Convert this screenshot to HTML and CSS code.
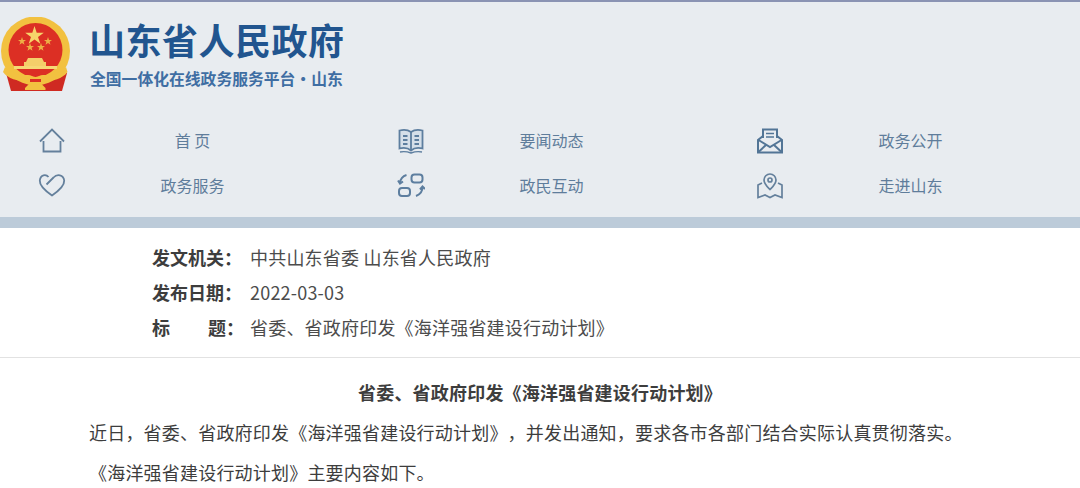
FILE: index.html
```html
<!DOCTYPE html>
<html lang="zh-CN">
<head>
  <meta charset="UTF-8" />
  <title>山东省人民政府</title>
  <link rel="stylesheet" href="styles.css">
</head>
<body>

  <header class="site-header">
    <div class="brand">
      <svg class="emblem" width="72" height="76" viewBox="0 0 72 76">
        <path d="M6 56 11 74h51l5-18z" fill="#cf2a22"/>
        <circle cx="35.500" cy="34" r="34.500" fill="#f2c140"/>
        <circle cx="35.500" cy="33" r="27" fill="#dc2f24"/>
        <polygon points="34.500,9 36.700,15.800 43.800,15.800 38,20 40.300,26.800 34.500,22.600 28.700,26.800 31,20 25.200,15.800 32.300,15.800" fill="#f6d46a"/>
        <polygon points="22,20 23,23 26,23 23.600,24.800 24.500,27.700 22,26 19.500,27.700 20.400,24.800 18,23 21,23" fill="#eeb045"/>
        <polygon points="48,20 49,23 52,23 49.600,24.800 50.500,27.700 48,26 45.500,27.700 46.400,24.800 44,23 47,23" fill="#eeb045"/>
        <polygon points="30,26 31,29 34,29 31.600,30.800 32.500,33.700 30,32 27.500,33.700 28.400,30.800 26,29 29,29" fill="#eeb045"/>
        <polygon points="41,26 42,29 45,29 42.600,30.800 43.500,33.700 41,32 38.500,33.700 39.400,30.800 37,29 40,29" fill="#eeb045"/>
        <path d="M28 41h14l2 4h2v4H24v-4h2z" fill="#f4cf6a"/>
        <path d="M14 49h43v3H14z" fill="#f6d876"/>
        <path d="M5 50c6 7 15 8 23 8 3 0 5 2 7.500 2s4.500-2 7.500-2c8 0 17-1 23-8l1.500 5c-5 7-15 9-23 9l-3 3 4 4v2H25v-2l4-4-3-3c-8 0-18-2-23-9z" fill="#f2c140"/>
        <path d="M30 62h11v3H30z" fill="#dc2f24"/>
      </svg>
      <div class="brand-text">
        <div class="brand-name">山东省人民政府</div>
        <div class="brand-sub">全国一体化在线政务服务平台·山东</div>
      </div>
    </div>

    <nav class="main-nav">
      <a class="nav-item">
        <svg class="nav-icon" width="28" height="28" viewBox="0 0 28 28" fill="none" stroke="#64809c" stroke-width="1.800">
          <path d="M2 14.500 14 2.500l12 12"/>
          <path d="M5.500 14v10.500h17V14"/>
        </svg>
        <span>首 页</span>
      </a>
      <a class="nav-item">
        <svg class="nav-icon" width="28" height="28" viewBox="0 0 28 28" fill="none" stroke="#5d7e9f" stroke-width="1.800">
          <path d="M2.500 3.500c4-1 8-1 11.500 1.500 3.500-2.500 7.500-2.500 11.500-1.500v18c-4-1-8-1-11.500 2-3.500-3-7.500-3-11.500-2z" fill="#d5dfe9"/>
          <path d="M14 5v18M6 9h4.500M6 13h4.500M6 17h4.500M17.500 9H22M17.500 13H22M17.500 17H22"/>
          <path d="M3 25c4-.8 7.500-.3 11 1 3.500-1.300 7-1.800 11-1" stroke-width="1.400"/>
        </svg>
        <span>要闻动态</span>
      </a>
      <a class="nav-item">
        <svg class="nav-icon" width="28" height="28" viewBox="0 0 28 28" fill="none" stroke="#527596" stroke-width="2">
          <path d="M7 11V2.500h14V11"/>
          <path d="M10 6.500h8M10 10h8" stroke-width="1.500"/>
          <path d="M7 9 2 13v12.500h24V13l-5-4"/>
          <path d="m2.500 13 11.500 7 11.500-7M2.500 25l8-7.500M25.500 25l-8-7.500"/>
        </svg>
        <span>政务公开</span>
      </a>
      <a class="nav-item">
        <svg class="nav-icon" width="28" height="28" viewBox="0 0 28 28" fill="none" stroke="#64809c" stroke-width="1.800">
          <path d="M10.500 5C8 2 2.500 2.500 1.800 8.500c-.4 5.500 7.200 11.500 12.200 15 5-3.500 12.600-9.500 12.200-15C25.500 2.500 19 1.800 15.500 5.500L8.500 12.500"/>
        </svg>
        <span>政务服务</span>
      </a>
      <a class="nav-item">
        <svg class="nav-icon" width="28" height="28" viewBox="0 0 28 28" fill="none" stroke="#5d7e9f" stroke-width="2">
          <rect x="14.500" y="2.500" width="11" height="8" rx="3"/>
          <rect x="2" y="16" width="11" height="8" rx="3"/>
          <path d="M9.500 3C6 4 3.500 6.500 3 11M1 8.500 3 11.500 6 9.500"/>
          <path d="M25.500 15c0 4.500-2.500 7.500-6.500 9M23 17.500l2.500-3 2.500 2.500" />
        </svg>
        <span>政民互动</span>
      </a>
      <a class="nav-item">
        <svg class="nav-icon" width="28" height="28" viewBox="0 0 28 28" fill="none" stroke="#64809c" stroke-width="1.700">
          <path d="M14 17.500c-3-3-6-5.500-6-9.500a6 6 0 0 1 12 0c0 4-3 6.500-6 9.500z"/>
          <circle cx="14" cy="8" r="2"/>
          <path d="M6 11 2 13v12.500l7-2.500 5 2.500 5-2.500 7 2.500V13l-4-2"/>
        </svg>
        <span>走进山东</span>
      </a>
    </nav>
  </header>

  <div class="band"></div>

  <section class="meta">
    <div class="meta-row"><span class="meta-label">发文机关：</span><span class="meta-value">中共山东省委 山东省人民政府</span></div>
    <div class="meta-row"><span class="meta-label">发布日期：</span><span class="meta-value">2022-03-03</span></div>
    <div class="meta-row"><span class="meta-label meta-spread"><i>标</i><i>题：</i></span><span class="meta-value">省委、省政府印发《海洋强省建设行动计划》</span></div>
  </section>

  <article class="content">
    <h2>省委、省政府印发《海洋强省建设行动计划》</h2>
    <p>近日，省委、省政府印发《海洋强省建设行动计划》，并发出通知，要求各市各部门结合实际认真贯彻落实。</p>
    <p>《海洋强省建设行动计划》主要内容如下。</p>
  </article>

</body>
</html>
```

FILE: styles.css
```css
:root {
  --fundo-topo: #e8ecf0;
  --azul-marca: #21558f;
  --azul-nav: #5f7d9b;
  --faixa: #bccbd9;
  --texto: #3d3d3d;
  --texto-leve: #4c4c4c;
  --linha: #e2e2e2;
}

html, body {
  height: 488px;
  overflow: hidden;
}

body {
  margin: 0;
  background: #fff;
  color: var(--texto);
  font-family: "Noto Sans CJK SC", "Liberation Sans", sans-serif;
  text-spacing-trim: space-all;
}

.site-header {
  height: 215px;
  background: var(--fundo-topo);
  border-top: 2px solid #8a93b3;
}

.brand {
  display: flex;
  align-items: flex-start;
  height: 108px;
  padding-top: 15px;
  box-sizing: border-box;
}

.emblem {
  flex: none;
}

.brand-text {
  margin: -2px 0 0 17px;
  color: var(--azul-marca);
  font-weight: 700;
}

.brand-name {
  font-size: 36px;
  line-height: 48px;
  letter-spacing: 0.500px;
}

.brand-sub {
  margin: 5px 0 0 1px;
  font-size: 15.800px;
  line-height: 22px;
  color: #3f6ea3;
  white-space: nowrap;
}

.main-nav {
  display: grid;
  grid-template-columns: repeat(3, 359px);
  grid-auto-rows: 45px;
  padding-top: 7px;
  padding-left: 38px;
}

.nav-item {
  display: flex;
  align-items: center;
  color: var(--azul-nav);
  font-size: 16px;
}

.nav-icon {
  flex: none;
  margin-top: 2px;
}

.nav-item span {
  width: 220px;
  margin-left: 11px;
  padding-left: 11px;
  text-align: center;
  box-sizing: border-box;
}

.band {
  height: 11px;
  background: var(--faixa);
}

.meta {
  height: 130px;
  padding: 11px 0 0 152px;
  box-sizing: border-box;
  border-bottom: 1px solid var(--linha);
  font-size: 18px;
  color: var(--texto-leve);
}

.meta-row {
  display: flex;
  height: 35px;
  align-items: center;
  white-space: nowrap;
}

.meta-label {
  width: 98px;
  flex: none;
  font-weight: 700;
  color: var(--texto);
}

.meta-value {
  letter-spacing: 0.200px;
}

.meta-spread {
  display: flex;
  justify-content: space-between;
}

.meta-spread i {
  font-style: normal;
}

.meta-spread i:last-child {
  margin-right: 6px;
}

.content {
  padding: 21px 89px 0;
  font-size: 18px;
  letter-spacing: 0.200px;
}

.content h2 {
  margin: 0 0 13px;
  font-size: 18px;
  line-height: 27px;
  font-weight: 700;
  text-align: center;
}

.content p {
  margin: 0 0 13px;
  line-height: 27px;
  white-space: nowrap;
}
```
